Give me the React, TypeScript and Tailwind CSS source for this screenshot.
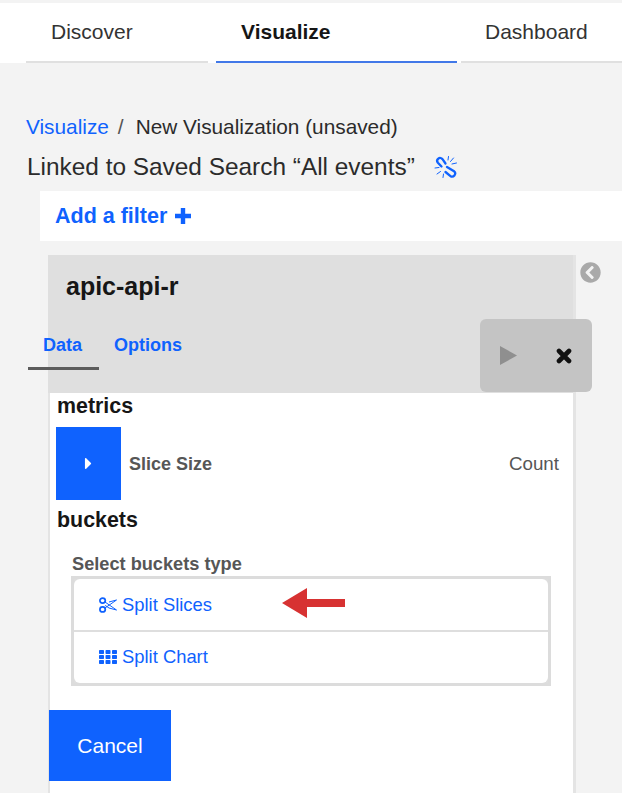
import { FaCaretRight, FaChevronCircleLeft } from "react-icons/fa";

function UnlinkIcon() {
  return (
    <svg width="24" height="24" viewBox="0 0 24 24" fill="none" stroke="#0f62fe" strokeLinecap="round">
      <path d="M11.5 8.5 L8.5 4.2 a3 3 0 0 0 -4.2 -0.6 a3 3 0 0 0 -0.4 4.2 L7.5 11.5" strokeWidth="2.3" />
      <path d="M13 12 L20 16.2 a3 3 0 0 1 0.4 4.2 a3 3 0 0 1 -4.2 0.4 L11.5 17" strokeWidth="2.3" />
      <path d="M14.5 1.5 L14 5 M19.5 3 L16.5 6.5 M22.5 8 L18 9 M1 13 L5 12.5 M3 19 L6.5 16.5 M9 22.5 L9.5 19" strokeWidth="1" />
    </svg>
  );
}

function ScissorsIcon() {
  return (
    <svg className="mr-[5px]" width="18" height="16" viewBox="0 0 18 16" fill="none" stroke="#0f62fe">
      <ellipse cx="3.6" cy="3.6" rx="2.7" ry="2.5" strokeWidth="1.7" />
      <ellipse cx="3.6" cy="12.4" rx="2.7" ry="2.5" strokeWidth="1.7" />
      <path d="M6 5 L17.5 13 L10 11 L6.2 8.4 M6 11 L17.5 3 L10 5" strokeWidth="1" strokeLinejoin="round" />
    </svg>
  );
}

function GridIcon() {
  return (
    <svg className="mr-[5px]" width="18" height="14" viewBox="0 0 18 14" fill="#0f62fe">
      <rect x="0" y="0" width="5" height="4" rx="0.7" />
      <rect x="6.5" y="0" width="5" height="4" rx="0.7" />
      <rect x="13" y="0" width="5" height="4" rx="0.7" />
      <rect x="0" y="5" width="5" height="4" rx="0.7" />
      <rect x="6.5" y="5" width="5" height="4" rx="0.7" />
      <rect x="13" y="5" width="5" height="4" rx="0.7" />
      <rect x="0" y="10" width="5" height="4" rx="0.7" />
      <rect x="6.5" y="10" width="5" height="4" rx="0.7" />
      <rect x="13" y="10" width="5" height="4" rx="0.7" />
    </svg>
  );
}

export default function App() {
  return (
    <div className="w-[622px] h-[793px] overflow-hidden bg-[#f3f3f3] font-['Liberation_Sans',Arial,sans-serif] pt-[3px]">
      {/* Top nav */}
      <div className="h-[60px] bg-white flex pl-[26px] text-[21px] text-[#333]">
        <div className="w-[182px] pl-[25px] pt-[13px] border-b-2 border-[#e0e0e0]">Discover</div>
        <div className="w-[241px] ml-[8px] pl-[25px] pt-[13px] border-b-2 border-[#4178e8] font-bold text-[#161616]">Visualize</div>
        <div className="flex-1 ml-[4px] pl-[24px] pt-[13px] border-b-2 border-[#e0e0e0]">Dashboard</div>
      </div>

      {/* Breadcrumb */}
      <div className="pl-[26px] mt-[51px] h-[26px] flex items-center text-[20.8px] text-[#2b2b2b] leading-none">
        <span className="text-[#0f62fe]">Visualize</span>
        <span className="ml-[9px] text-[#555]">/</span>
        <span className="ml-[12px]">New Visualization (unsaved)</span>
      </div>
      <div className="pl-[27px] mt-[12px] h-[30px] flex items-center text-[24.4px] text-[#2b2b2b] leading-none">
        <span>Linked to Saved Search “All events”</span>
        <span className="ml-[19px]"><UnlinkIcon /></span>
      </div>

      {/* Filter bar */}
      <div className="ml-[40px] mt-[9px] h-[50px] bg-white flex items-center pl-[15px] text-[21.5px] font-bold text-[#0f62fe]">
        Add a filter
        <svg className="ml-[8px]" width="16" height="16" viewBox="0 0 16 16" fill="#0f62fe">
          <path d="M5.8 0 H10.2 V5.8 H16 V10.2 H10.2 V16 H5.8 V10.2 H0 V5.8 H5.8 Z" />
        </svg>
      </div>

      {/* Panel */}
      <div className="relative ml-[48px] mt-[14px] w-[528px] h-[540px] bg-white border-l-2 border-r-[3px] border-[#e4e4e4]">
        <div className="-ml-[2px] w-[525px] h-[138px] bg-[#dfdfdf] relative">
          <div className="pl-[18px] pt-[17px] text-[25px] leading-[28px] font-bold text-[#161616]">apic-api-r</div>
          <div className="flex -ml-[20px] mt-[33px] text-[18px] leading-[22px] font-bold text-[#0f62fe]">
            <div className="w-[71px] h-[37px] pl-[15px] pt-[1px] border-b-[3px] border-[#5c5c5c]">Data</div>
            <div className="ml-[15px] pt-[1px]">Options</div>
          </div>
        </div>

        {/* Run / discard */}
        <div className="absolute left-[430px] top-[64px] w-[112px] h-[73px] rounded-[6px] bg-[#c4c4c4] flex items-center">
          <svg className="ml-[20px]" width="17" height="19" viewBox="0 0 17 19" fill="#8f8f8f">
            <path d="M0 0 L17 9.5 L0 19 Z" />
          </svg>
          <svg className="ml-[39px]" width="16" height="16" viewBox="0 0 16 16" stroke="#111" strokeWidth="4.6" strokeLinecap="round">
            <path d="M3 3 L13 13 M13 3 L3 13" />
          </svg>
        </div>
        <FaChevronCircleLeft className="absolute left-[530px] top-[7px] text-[21px] text-[#a9a9a9]" />

        <div className="pl-[6px] pr-[14px]">
          <div className="h-[34px] pl-[1px] text-[21.4px] leading-[27px] font-bold text-[#161616]">metrics</div>
          <div className="flex items-center h-[73px]">
            <div className="w-[65px] h-full bg-[#0f62fe] flex items-center justify-center text-white">
              <FaCaretRight className="text-[19px]" />
            </div>
            <span className="ml-[8px] pt-[1px] text-[18px] font-bold text-[#565656]">Slice Size</span>
            <span className="ml-auto pt-[1px] text-[18.8px] text-[#565656]">Count</span>
          </div>
          <div className="mt-[7px] pl-[1px] text-[21.4px] leading-[27px] font-bold text-[#161616]">buckets</div>

          <div className="ml-[16px] mt-[20px] text-[18.2px] leading-[20px] font-bold text-[#565656]">Select buckets type</div>
          <div className="ml-[15px] mt-[2px] w-[480px] h-[110px] border-[3px] border-[#dcdcdc] bg-[#dedede] flex flex-col gap-[2px]">
            <div className="h-[51px] bg-white rounded-t-[6px] flex items-center pl-[25px] text-[18.4px] text-[#0f62fe]">
              <ScissorsIcon />
              Split Slices
            </div>
            <div className="h-[51px] pb-[2px] bg-white rounded-b-[6px] flex items-center pl-[25px] text-[18.4px] text-[#0f62fe]">
              <GridIcon />
              Split Chart
            </div>
          </div>
        </div>

        <button className="block mt-[24px] ml-[-1px] w-[122px] h-[71px] bg-[#0f62fe] text-white text-[21px]">Cancel</button>

        {/* Annotation arrow */}
        <svg className="absolute left-[232px] top-[333px]" width="65" height="32" viewBox="0 0 65 32">
          <path d="M0 15 L25 0 L25 11 L63 11 L63 19 L25 19 L25 30 Z" fill="#d73232" />
        </svg>
      </div>
    </div>
  );
}
